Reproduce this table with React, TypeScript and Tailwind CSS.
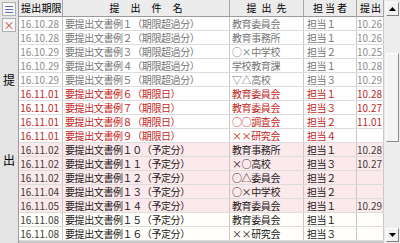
import React from "react";

type Row = {
  date: string;
  title: string;
  dest: string;
  person: string;
  sent: string;
  kind: "over" | "today" | "plan" | "later";
};

const rows: Row[] = [
  { date: "16.10.28", title: "要提出文書例１（期限超過分）", dest: "教育委員会", person: "担当１", sent: "10.26", kind: "over" },
  { date: "16.10.28", title: "要提出文書例２（期限超過分）", dest: "教育事務所", person: "担当１", sent: "10.26", kind: "over" },
  { date: "16.10.29", title: "要提出文書例３（期限超過分）", dest: "○×中学校", person: "担当２", sent: "10.25", kind: "over" },
  { date: "16.10.29", title: "要提出文書例４（期限超過分）", dest: "学校教育課", person: "担当１", sent: "10.28", kind: "over" },
  { date: "16.10.29", title: "要提出文書例５（期限超過分）", dest: "▽△高校", person: "担当３", sent: "10.29", kind: "over" },
  { date: "16.11.01", title: "要提出文書例６（期限日）", dest: "教育委員会", person: "担当１", sent: "10.28", kind: "today" },
  { date: "16.11.01", title: "要提出文書例７（期限日）", dest: "教育委員会", person: "担当３", sent: "10.27", kind: "today" },
  { date: "16.11.01", title: "要提出文書例８（期限日）", dest: "○○調査会", person: "担当２", sent: "11.01", kind: "today" },
  { date: "16.11.01", title: "要提出文書例９（期限日）", dest: "××研究会", person: "担当４", sent: "", kind: "today" },
  { date: "16.11.02", title: "要提出文書例１０（予定分）", dest: "教育事務所", person: "担当１", sent: "10.28", kind: "plan" },
  { date: "16.11.02", title: "要提出文書例１１（予定分）", dest: "×○高校", person: "担当３", sent: "10.27", kind: "plan" },
  { date: "16.11.02", title: "要提出文書例１２（予定分）", dest: "○△委員会", person: "担当２", sent: "", kind: "plan" },
  { date: "16.11.04", title: "要提出文書例１３（予定分）", dest: "○×中学校", person: "担当２", sent: "", kind: "plan" },
  { date: "16.11.05", title: "要提出文書例１４（予定分）", dest: "教育委員会", person: "担当１", sent: "10.29", kind: "plan" },
  { date: "16.11.08", title: "要提出文書例１５（予定分）", dest: "教育委員会", person: "担当１", sent: "", kind: "later" },
  { date: "16.11.08", title: "要提出文書例１６（予定分）", dest: "××研究会", person: "担当３", sent: "", kind: "later" },
];

const styles = {
  over: { bg: "bg-white", text: "text-[#767676]", num: "text-[#8e8e8e]" },
  today: { bg: "bg-white", text: "text-[#c41e24]", num: "text-[#b82a2a]" },
  plan: { bg: "bg-[#fce9ec]", text: "text-[#1a1a1a]", num: "text-[#404040]" },
  later: { bg: "bg-[#fffefa]", text: "text-[#1a1a1a]", num: "text-[#404040]" },
};

const cols = "grid grid-cols-[44px_167px_74px_53px_27px]";

export default function App() {
  return (
    <div
      className="flex w-[400px] h-[243px] overflow-hidden bg-[#f0f0f0] text-black"
      style={{ fontFamily: '"Noto Sans CJK JP", "Noto Sans", sans-serif' }}
    >
      {/* left strip */}
      <div className="w-[19px] shrink-0 flex flex-col items-center bg-[#e4e4e4] border-r border-[#9c9c9c]">
        <button className="mt-[2px] w-[14px] h-[14px] flex items-center justify-center bg-[#f6f6f6] border border-[#b0b0b0] text-[#3a4fa8] text-[11px] leading-none">
          ≡
        </button>
        <button className="mt-[2px] w-[14px] h-[14px] flex items-center justify-center bg-[#f6f6f6] border border-[#b0b0b0] text-[#d04040] text-[11px] leading-none">
          ×
        </button>
        <div className="mt-[42px] text-[12px] leading-none">提</div>
        <div className="mt-[68px] text-[12px] leading-none">出</div>
      </div>

      {/* table */}
      <div className="w-[365px] shrink-0 flex flex-col bg-white border-b-2 border-[#c8c8c8]">
        <div className={`${cols} h-[17px] bg-[#ececec] border-b border-[#9a9a9a] text-[10px] leading-[16px]`}>
          <div className="pl-[2px] border-r border-[#a8a8a8] tracking-[0.2px] whitespace-nowrap overflow-hidden">提出期限</div>
          <div className="text-center border-r border-[#a8a8a8] tracking-[11px] pl-[11px]">提出件名</div>
          <div className="text-center border-r border-[#a8a8a8] tracking-[5px] pl-[5px]">提出先</div>
          <div className="text-center border-r border-[#a8a8a8] tracking-[2px] pl-[2px]">担当者</div>
          <div className="pl-[3px] border-r border-[#a8a8a8] tracking-[1px] whitespace-nowrap overflow-hidden">提出</div>
        </div>
        {rows.map((r, i) => {
          const s = styles[r.kind];
          return (
            <div key={i} className={`${cols} h-[14px] ${s.bg} border-b border-[#dcdcdc] text-[10px] leading-[13px] whitespace-nowrap`}>
              <div className={`pr-[3px] text-right border-r border-[#c8c8c8] ${s.num}`}>{r.date}</div>
              <div className={`pl-[2px] border-r border-[#c8c8c8] tracking-[-0.4px] overflow-hidden ${s.text}`}>{r.title}</div>
              <div className={`pl-[2px] border-r border-[#c8c8c8] tracking-[-0.4px] overflow-hidden ${s.text}`}>{r.dest}</div>
              <div className={`pl-[3px] border-r border-[#c8c8c8] tracking-[-0.4px] ${s.text}`}>{r.person}</div>
              <div className={`pr-[1px] text-right border-r border-[#c8c8c8] ${s.num}`}>{r.sent}</div>
            </div>
          );
        })}
      </div>

      {/* scrollbar */}
      <div className="w-[16px] shrink-0 flex flex-col items-center bg-[#ededed] pl-[1px]">
        <div className="mt-[2px] w-[13px] h-[14px] flex items-center justify-center bg-[#f2f2f2] border border-t-white border-l-white border-r-[#808080] border-b-[#808080]">
          <svg width="7" height="4" viewBox="0 0 7 4">
            <path d="M0 4 L3.5 0 L7 4 Z" fill="#000" />
          </svg>
        </div>
        <div className="flex-1 w-full flex flex-col items-center">
          <div className="mt-[37px] w-[13px] h-[89px] bg-[#f4f4f4] border border-t-white border-l-white border-r-[#8a8a8a] border-b-[#8a8a8a]" />
        </div>
        <div className="mb-[1px] w-[13px] h-[14px] flex items-center justify-center bg-[#f2f2f2] border border-t-white border-l-white border-r-[#808080] border-b-[#808080]">
          <svg width="7" height="4" viewBox="0 0 7 4">
            <path d="M0 0 L3.5 4 L7 0 Z" fill="#000" />
          </svg>
        </div>
      </div>
    </div>
  );
}
